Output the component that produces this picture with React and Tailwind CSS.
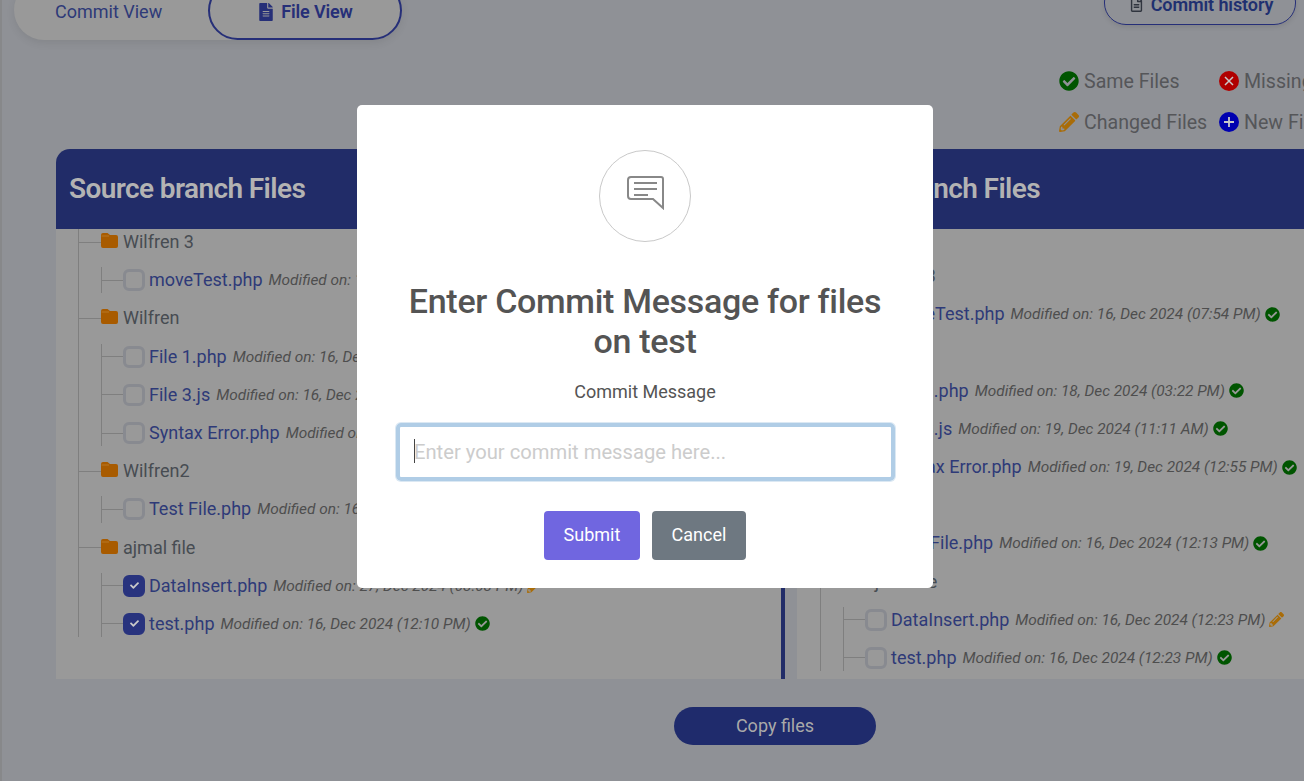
import React from "react";
import { FaFileAlt, FaRegFileAlt, FaCheckCircle, FaPencilAlt, FaCheck } from "react-icons/fa";

const names = [
  { folder: "Wilfren 3", files: ["moveTest.php"] },
  { folder: "Wilfren", files: ["File 1.php", "File 3.js", "Syntax Error.php"] },
  { folder: "Wilfren2", files: ["Test File.php"] },
  { folder: "ajmal file", files: ["DataInsert.php", "test.php"] },
];

const leftMeta = {
  "moveTest.php": ["16, Dec 2024 (07:54 PM)", "same"],
  "File 1.php": ["16, Dec 2024 (12:10 PM)", "same"],
  "File 3.js": ["16, Dec 2024 (12:10 PM)", "same"],
  "Syntax Error.php": ["16, Dec 2024 (12:10 PM)", "same"],
  "Test File.php": ["16, Dec 2024 (12:13 PM)", "same"],
  "DataInsert.php": ["27, Dec 2024 (03:03 PM)", "changed"],
  "test.php": ["16, Dec 2024 (12:10 PM)", "same"],
};
const rightMeta = {
  "moveTest.php": ["16, Dec 2024 (07:54 PM)", "same"],
  "File 1.php": ["18, Dec 2024 (03:22 PM)", "same"],
  "File 3.js": ["19, Dec 2024 (11:11 AM)", "same"],
  "Syntax Error.php": ["19, Dec 2024 (12:55 PM)", "same"],
  "Test File.php": ["16, Dec 2024 (12:13 PM)", "same"],
  "DataInsert.php": ["16, Dec 2024 (12:23 PM)", "changed"],
  "test.php": ["16, Dec 2024 (12:23 PM)", "same"],
};

function FolderIcon() {
  return (
    <svg viewBox="0 0 17 15" className="-mt-[3px] h-[15px] w-[17px] shrink-0">
      <path d="M2 0H6.5L9 2H15a2 2 0 0 1 2 2V13a2 2 0 0 1-2 2H2a2 2 0 0 1-2-2V2a2 2 0 0 1 2-2z" fill="#a85b00" />
      <path d="M0.5 3H8" stroke="#c08436" strokeWidth="0.7" />
    </svg>
  );
}

function FileRow({ name, meta, checked }) {
  return (
    <li className="flex h-[26.2px] items-center whitespace-nowrap">
      <span className="h-px w-[21px] bg-[#7f7f7f]" />
      <span
        className={`flex h-[22px] w-[22px] shrink-0 items-center justify-center rounded-[6px] border-[3px] ${
          checked ? "border-[#28337e] bg-[#28337e]" : "border-[#888a90] bg-[#999999]"
        }`}
      >
        {checked && <FaCheck className="text-[9px] text-[#c9c9c9]" />}
      </span>
      <span className="ml-[4px] text-[18px] leading-[26px] text-[#2e3a78]">{name}</span>
      <span className="ml-[6px] text-[15.4px] italic leading-[26px] text-[#4e4e4e]">Modified on: {meta[0]}</span>
      {meta[1] === "same" ? (
        <FaCheckCircle className="ml-[4px] text-[15px] text-[#005500]" />
      ) : (
        <FaPencilAlt className="ml-[4px] text-[15px] text-[#a96c08]" />
      )}
    </li>
  );
}

function Tree({ metaMap, checkedNames = [] }) {
  return (
    <ul className="ml-[22px] flex flex-col border-l border-[#7f7f7f]">
      {names.map((g, i) => (
        <li key={g.folder} className={i < names.length - 1 ? "mb-[12px]" : ""}>
          <div className="flex h-[26.2px] items-center whitespace-nowrap">
            <span className="h-px w-[22px] bg-[#7f7f7f]" />
            <FolderIcon />
            <span className="ml-[5px] text-[18px] leading-[26px] text-[#474c52]">{g.folder}</span>
          </div>
          <ul className="ml-[22px] mt-[12px] flex flex-col gap-[12px] border-l border-[#7f7f7f]">
            {g.files.map((f) => (
              <FileRow key={f} name={f} meta={metaMap[f]} checked={checkedNames.includes(f)} />
            ))}
          </ul>
        </li>
      ))}
    </ul>
  );
}

function Dot({ color, children }) {
  return (
    <svg viewBox="0 0 20 20" className="h-[20px] w-[20px] shrink-0">
      <circle cx="10" cy="10" r="10" fill={color} />
      {children}
    </svg>
  );
}

function Legend({ icon, label }) {
  return (
    <div className="flex h-[41px] items-center gap-[5px] whitespace-nowrap text-[19.6px] text-[#555659]">
      {icon}
      <span className="pt-[2px]">{label}</span>
    </div>
  );
}

export default function App() {
  return (
    <div className="relative flex h-[781px] w-[1304px] overflow-hidden bg-[#8f9196] font-['Roboto',sans-serif]">
      <div className="w-[2px] shrink-0 bg-[#87888a]" />
      <main className="flex min-w-0 flex-1 flex-col">
        <div className="-mt-[20px] flex h-[60px] shrink-0 items-start justify-between pl-[12px] pr-[8px]">
          <div className="flex h-[60px] w-[388px] items-center rounded-[30px] bg-[#999999] shadow-[0_3px_8px_rgba(0,0,0,0.08)]">
            <span className="ml-[41px] pt-[3px] text-[18px] text-[#2e3a78]">Commit View</span>
            <span className="ml-auto flex h-[59px] w-[194px] items-center justify-center gap-[6px] rounded-[30px] border-2 border-[#262f78] pt-[3px] text-[18px] font-semibold tracking-[-0.15px] text-[#262f78]">
              <FaFileAlt className="text-[18px]" />
              File View
            </span>
          </div>
          <span className="flex h-[45px] w-[192px] items-center justify-center gap-[7px] rounded-[22px] border border-[#262f78] pl-[2px] pt-[4px] text-[18px] font-semibold tracking-[-0.1px] text-[#1f3070] shadow-[0_2px_5px_rgba(0,0,0,0.1)]">
            <FaRegFileAlt className="text-[15px] text-[#30353f]" />
            Commit history
          </span>
        </div>

        <div className="ml-[1057px] mt-[20px] grid w-[400px] shrink-0 grid-cols-[160px_240px]">
          <Legend icon={<FaCheckCircle className="text-[20px] text-[#005500]" />} label="Same Files" />
          <Legend
            icon={
              <Dot color="#b00000">
                <path d="M6 6l8 8M14 6l-8 8" stroke="#c9c9c9" strokeWidth="1.5" />
              </Dot>
            }
            label="Missing Files"
          />
          <Legend icon={<FaPencilAlt className="text-[20px] text-[#a96c08]" />} label="Changed Files" />
          <Legend
            icon={
              <Dot color="#0000b0">
                <path d="M10 5v10M5 10h10" stroke="#c9c9c9" strokeWidth="1.8" />
              </Dot>
            }
            label="New Files"
          />
        </div>

        <section className="ml-[54px] mt-[7px] flex w-[1300px] shrink-0 flex-col">
          <header className="flex h-[80px] items-center justify-between rounded-t-[14px] bg-[#212c68] text-[28px] font-semibold tracking-[-0.6px] text-[#b3b3b3]">
            <h2 className="ml-[13px]">Source branch Files</h2>
            <h2 className="mr-[316px]">Target branch Files</h2>
          </header>
          <div className="flex h-[450px]">
            <div className="w-[725px] overflow-hidden bg-[#999999]">
              <Tree metaMap={leftMeta} checkedNames={["DataInsert.php", "test.php"]} />
            </div>
            <div className="w-[4px] bg-[#212c68]" />
            <div className="ml-[12px] flex-1 overflow-hidden bg-[#999999] pl-px pt-[34px]">
              <Tree metaMap={rightMeta} />
            </div>
          </div>
        </section>

        <button className="ml-[672px] mt-[28px] h-[38px] w-[202px] shrink-0 rounded-[19px] bg-[#1f2b6c] pb-[2px] text-[18px] text-[#a9a9a9]">
          Copy files
        </button>
      </main>

      <div className="absolute inset-0 pl-[357px] pt-[105px]">
        <div className="flex h-[483px] w-[576px] flex-col items-center rounded-[5px] bg-white pt-[45px] text-[#545454]">
          <div className="flex h-[92px] w-[92px] items-center justify-center rounded-full border border-[#c9c9c9]">
            <svg viewBox="0 0 37 34" className="-mt-[6px] h-[34px] w-[37px]" fill="none" stroke="#888888" strokeWidth="2">
              <path d="M4 1H34a2 2 0 0 1 2 2V32L26 23H4a3 3 0 0 1-3-3V4a3 3 0 0 1 3-3z" />
              <path d="M7 7H30M7 13H30M7 19H21" />
            </svg>
          </div>
          <h1 className="mt-[39px] w-[480px] text-center text-[34px] font-medium leading-[40px] tracking-[-0.3px]">
            Enter Commit Message for files on test
          </h1>
          <label className="mt-[19px] text-[18px] leading-[24px]">Commit Message</label>
          <div className="relative ml-[1px] mt-[19px] h-[58px] w-[499px]">
            <input
              readOnly
              placeholder="Enter your commit message here..."
              className="h-full w-full rounded-[5px] border-[4px] border-[#b0cde6] pb-[1px] pl-[14px] text-[20.2px] shadow-[0_0_0_1px_#dbe8f3] outline-none placeholder:text-[#cccccc]"
            />
            <span className="absolute left-[18px] top-[16px] h-[24px] w-px bg-[#444444]" />
          </div>
          <div className="mt-[30px] flex gap-[12px]">
            <button className="h-[49px] w-[96px] rounded-[4px] bg-[#7066e0] pb-[2px] text-[18px] text-white">Submit</button>
            <button className="h-[49px] w-[94px] rounded-[4px] bg-[#6e7881] pb-[2px] text-[18px] text-white">Cancel</button>
          </div>
        </div>
      </div>
    </div>
  );
}
